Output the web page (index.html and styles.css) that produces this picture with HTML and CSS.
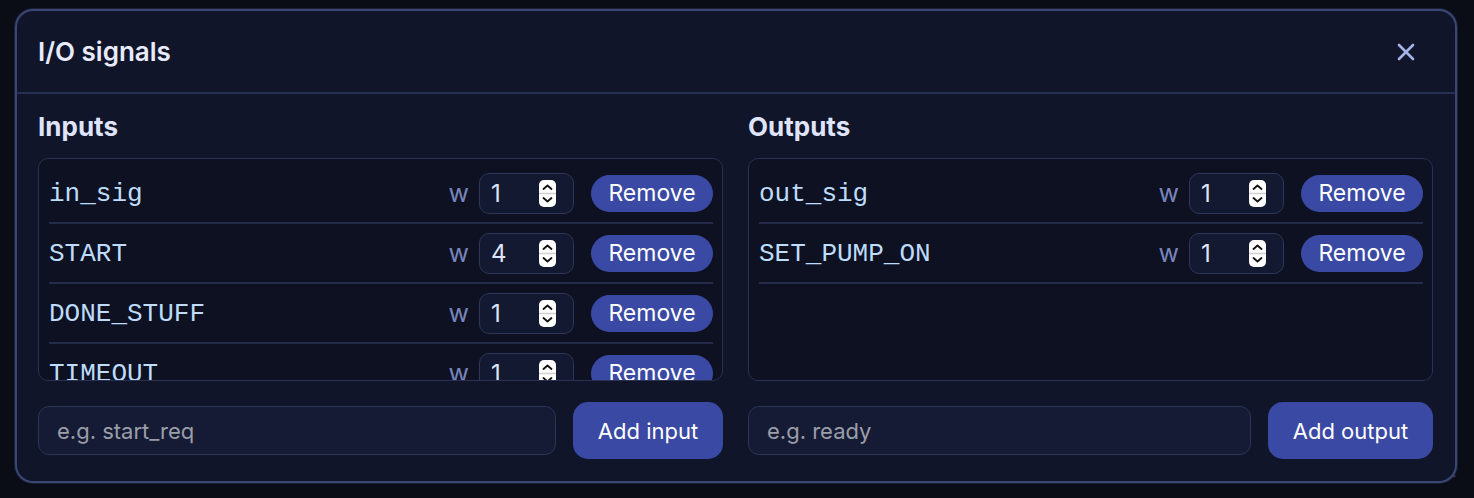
FILE: index.html
```html
<!DOCTYPE html>
<html lang="en">
<head>
    <meta charset="UTF-8">
    <meta name="viewport" content="width=device-width, initial-scale=1.0">
    <title>I/O signals</title>
    <link rel="stylesheet" href="styles.css">
</head>
<body>
    <div class="dialog">
        <!-- Header -->
        <div class="dialogHeader">
            <h2>I/O signals</h2>
            <button class="closeBtn" aria-label="Close">
                <svg width="18" height="18" viewBox="0 0 18 18"><path d="M2 2 L16 16 M16 2 L2 16" stroke="currentColor" stroke-width="2.6" stroke-linecap="round"/></svg>
            </button>
        </div>

        <div class="dialogBody">
            <!-- Inputs column -->
            <div class="column">
                <h3>Inputs</h3>
                <div class="signalList">
                    <div class="signalRow">
                        <span class="sigName">in_sig</span>
                        <span class="wLabel">w</span>
                        <div class="numBox"><span>1</span><i class="spin"><svg width="17" height="27" viewBox="0 0 17 27"><path d="M4.5 9 L8.5 5.5 L12.5 9 M4.5 18 L8.5 21.5 L12.5 18" fill="none" stroke="#111" stroke-width="1.8" stroke-linecap="round" stroke-linejoin="round"/><path d="M0 13.5 H17" stroke="#cfcfd4" stroke-width="1.5"/></svg></i></div>
                        <button class="removeBtn">Remove</button>
                    </div>
                    <div class="signalRow">
                        <span class="sigName">START</span>
                        <span class="wLabel">w</span>
                        <div class="numBox"><span>4</span><i class="spin"><svg width="17" height="27" viewBox="0 0 17 27"><path d="M4.5 9 L8.5 5.5 L12.5 9 M4.5 18 L8.5 21.5 L12.5 18" fill="none" stroke="#111" stroke-width="1.8" stroke-linecap="round" stroke-linejoin="round"/><path d="M0 13.5 H17" stroke="#cfcfd4" stroke-width="1.5"/></svg></i></div>
                        <button class="removeBtn">Remove</button>
                    </div>
                    <div class="signalRow">
                        <span class="sigName">DONE_STUFF</span>
                        <span class="wLabel">w</span>
                        <div class="numBox"><span>1</span><i class="spin"><svg width="17" height="27" viewBox="0 0 17 27"><path d="M4.5 9 L8.5 5.5 L12.5 9 M4.5 18 L8.5 21.5 L12.5 18" fill="none" stroke="#111" stroke-width="1.8" stroke-linecap="round" stroke-linejoin="round"/><path d="M0 13.5 H17" stroke="#cfcfd4" stroke-width="1.5"/></svg></i></div>
                        <button class="removeBtn">Remove</button>
                    </div>
                    <div class="signalRow">
                        <span class="sigName">TIMEOUT</span>
                        <span class="wLabel">w</span>
                        <div class="numBox"><span>1</span><i class="spin"><svg width="17" height="27" viewBox="0 0 17 27"><path d="M4.5 9 L8.5 5.5 L12.5 9 M4.5 18 L8.5 21.5 L12.5 18" fill="none" stroke="#111" stroke-width="1.8" stroke-linecap="round" stroke-linejoin="round"/><path d="M0 13.5 H17" stroke="#cfcfd4" stroke-width="1.5"/></svg></i></div>
                        <button class="removeBtn">Remove</button>
                    </div>
                </div>
                <div class="addRow">
                    <input type="text" placeholder="e.g. start_req">
                    <button class="addBtn">Add input</button>
                </div>
            </div>

            <!-- Outputs column -->
            <div class="column">
                <h3>Outputs</h3>
                <div class="signalList">
                    <div class="signalRow">
                        <span class="sigName">out_sig</span>
                        <span class="wLabel">w</span>
                        <div class="numBox"><span>1</span><i class="spin"><svg width="17" height="27" viewBox="0 0 17 27"><path d="M4.5 9 L8.5 5.5 L12.5 9 M4.5 18 L8.5 21.5 L12.5 18" fill="none" stroke="#111" stroke-width="1.8" stroke-linecap="round" stroke-linejoin="round"/><path d="M0 13.5 H17" stroke="#cfcfd4" stroke-width="1.5"/></svg></i></div>
                        <button class="removeBtn">Remove</button>
                    </div>
                    <div class="signalRow">
                        <span class="sigName">SET_PUMP_ON</span>
                        <span class="wLabel">w</span>
                        <div class="numBox"><span>1</span><i class="spin"><svg width="17" height="27" viewBox="0 0 17 27"><path d="M4.5 9 L8.5 5.5 L12.5 9 M4.5 18 L8.5 21.5 L12.5 18" fill="none" stroke="#111" stroke-width="1.8" stroke-linecap="round" stroke-linejoin="round"/><path d="M0 13.5 H17" stroke="#cfcfd4" stroke-width="1.5"/></svg></i></div>
                        <button class="removeBtn">Remove</button>
                    </div>
                </div>
                <div class="addRow">
                    <input type="text" placeholder="e.g. ready">
                    <button class="addBtn wide">Add output</button>
                </div>
            </div>
        </div>
    </div>
</body>
</html>
```

FILE: styles.css
```css
/* Adjust the box model */
*, *:before, *:after {
    box-sizing: border-box;
}
html, body {
    margin: 0;
    padding: 0;
}
body {
    width: 1474px;
    height: 498px;
    overflow: hidden;
    background-color: #0a0c16;
    background-image: radial-gradient(circle, #4a5069 0.9px, transparent 1.3px);
    background-size: 32.5px 32.5px;
    background-position: 7.75px 4.75px;
    font-family: Inter, "Noto Sans", sans-serif;
    color: #e4e8fa;
}

.dialog {
    width: 1442px;
    height: 474px;
    margin: 9px 0 0 15px;
    background-color: #10152a;
    border: 2px solid #3a4674;
    border-radius: 18px;
    box-shadow: 0 0 0 1px rgba(58,70,116,0.35);
    overflow: hidden;
}

.dialogHeader {
    height: 83px;
    display: flex;
    align-items: center;
    justify-content: space-between;
    padding: 0 31px 0 21px;
    border-bottom: 2px solid #28304f;
}
.dialogHeader h2 {
    margin: 0;
    font-size: 26px;
    font-weight: 600;
    color: #e8ebfb;
}
.closeBtn {
    width: 36px;
    height: 36px;
    display: flex;
    align-items: center;
    justify-content: center;
    background: none;
    border: none;
    padding: 0;
    color: #a6b3e6;
    cursor: pointer;
}

.dialogBody {
    display: grid;
    grid-template-columns: 1fr 1fr;
    gap: 25px;
    padding: 16px 22px 0 21px;
}
.column h3 {
    margin: 0 0 15px;
    height: 33px;
    line-height: 33px;
    font-size: 26px;
    font-weight: 700;
    color: #dfe4fb;
}

.signalList {
    height: 223px;
    overflow: hidden;
    background-color: #0d1121;
    border: 1px solid #2a3153;
    border-radius: 10px;
    padding: 5px 9px 0 10px;
}
.signalRow {
    height: 60px;
    display: flex;
    align-items: center;
    border-bottom: 2px solid #252c4b;
}
.sigName {
    flex: 1;
    font-family: "Liberation Mono", monospace;
    font-size: 26px;
    line-height: 40px;
    padding-top: 2px;
    color: #bedcfb;
}
.wLabel {
    font-size: 25px;
    color: #7884bb;
    margin-right: 10px;
}
.numBox {
    width: 95px;
    height: 41px;
    display: flex;
    align-items: center;
    justify-content: space-between;
    padding: 0 17px 0 11px;
    background-color: #131930;
    border: 1px solid #2e3759;
    border-radius: 10px;
    font-size: 24px;
    color: #dfe5f8;
}
.spin {
    display: flex;
    width: 17px;
    height: 27px;
    background-color: #fff;
    border-radius: 5px;
    overflow: hidden;
}
.removeBtn {
    width: 122px;
    height: 37px;
    margin-left: 17px;
    border: none;
    border-radius: 19px;
    background-color: #3a49a3;
    color: #fff;
    font-family: inherit;
    font-size: 23px;
    padding: 0;
    cursor: pointer;
}

.addRow {
    display: flex;
    align-items: center;
    gap: 17px;
    margin-top: 21px;
}
.addRow input {
    flex: 1;
    height: 49px;
    padding: 0 18px;
    background-color: #151b34;
    border: 1px solid #2c3557;
    border-radius: 11px;
    font-family: inherit;
    font-size: 22px;
    color: #e4e8fa;
    outline: none;
}
.addRow input::placeholder {
    color: #9b9ea9;
}
.addBtn {
    width: 150px;
    height: 57px;
    border: none;
    border-radius: 15px;
    background-color: #3a49a3;
    color: #fff;
    font-family: inherit;
    font-size: 22px;
    padding: 0;
    cursor: pointer;
}
.addBtn.wide {
    width: 165px;
}
```
